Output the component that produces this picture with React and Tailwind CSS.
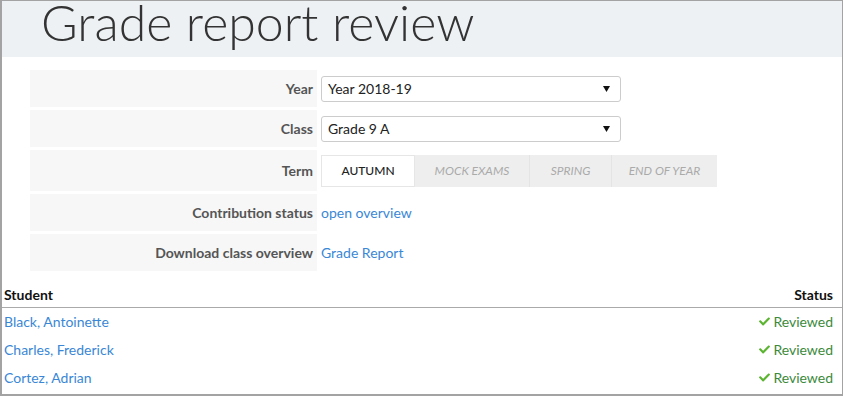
import React from 'react';
import { FaCheck } from 'react-icons/fa';

const font = { fontFamily: 'Lato, "Noto Sans", sans-serif' };

const students = ['Black, Antoinette', 'Charles, Frederick', 'Cortez, Adrian'];
const terms = [
  { name: 'Autumn', w: 'w-[94px]' },
  { name: 'Mock exams', w: 'w-[114px]' },
  { name: 'Spring', w: 'w-[82px]' },
  { name: 'End of year', w: 'w-[106px]' },
];

function Arrow() {
  return (
    <svg width="7" height="6" viewBox="0 0 7 6">
      <polygon points="0,0 7,0 3.5,6" fill="#111" />
    </svg>
  );
}

function Select({ value }) {
  return (
    <div className="w-[300px] h-[26px] border border-[#cccccc] rounded-[3px] flex items-center justify-between pl-[6px] pr-[10px] text-[14px] text-[#222]">
      <span>{value}</span>
      <Arrow />
    </div>
  );
}

function Row({ label, tall, children }) {
  return (
    <>
      <div className={`bg-[#f7f7f7] flex items-center justify-end pr-[4px] text-[14px] font-bold text-[#555] ${tall ? 'h-[41px]' : 'h-[37px]'}`}>
        {label}
      </div>
      <div className="flex items-center pl-[4px]">{children}</div>
    </>
  );
}

export default function App() {
  return (
    <div style={font} className="w-[843px] h-[396px] bg-white border-[#a3a3a3] border-t border-r border-l-2 border-b-2 overflow-hidden">
      <div className="h-[56px] bg-[#edf1f4] pl-[39px]">
        <h1 className="text-[50px] leading-[42px] font-light text-[#333]">Grade report review</h1>
      </div>

      <div className="mt-[13px] ml-[28px] grid grid-cols-[287px_1fr] gap-y-[3px]">
        <Row label="Year"><Select value="Year 2018-19" /></Row>
        <Row label="Class"><Select value="Grade 9 A" /></Row>
        <Row label="Term" tall>
          <div className="flex h-[32px] bg-[#eeeeee] text-[12px] uppercase">
            {terms.map((t, i) => (
              <div
                key={t.name}
                className={`${t.w} flex items-center justify-center ${i === 0 ? 'bg-white border border-[#e6e6e6] text-[#222] font-medium' : 'italic text-[#aaaaaa]'} ${i > 1 ? 'border-l border-[#e4e4e4]' : ''}`}
              >
                {t.name}
              </div>
            ))}
          </div>
        </Row>
        <Row label="Contribution status">
          <a className="text-[14px] text-[#3a87d6]">open overview</a>
        </Row>
        <Row label="Download class overview">
          <a className="text-[14px] text-[#3a87d6]">Grade Report</a>
        </Row>
      </div>

      <table className="mt-[12px] w-full text-[14px] border-collapse">
        <thead>
          <tr className="h-[24px] border-b border-[#aaaaaa]">
            <th className="text-left font-bold text-[#111] pl-[2px]">Student</th>
            <th className="text-right font-bold text-[#111] pr-[9px]">Status</th>
          </tr>
        </thead>
        <tbody>
          {students.map(s => (
            <tr key={s} className="h-[28px]">
              <td className="pl-[2px] text-[#3a87d6]">{s}</td>
              <td className="pr-[9px]">
                <div className="flex items-center justify-end gap-[3px] text-[#3b8a3b]">
                  <FaCheck className="text-[#5cb531] w-[11px] h-[11px]" />
                  <span>Reviewed</span>
                </div>
              </td>
            </tr>
          ))}
        </tbody>
      </table>
    </div>
  );
}
